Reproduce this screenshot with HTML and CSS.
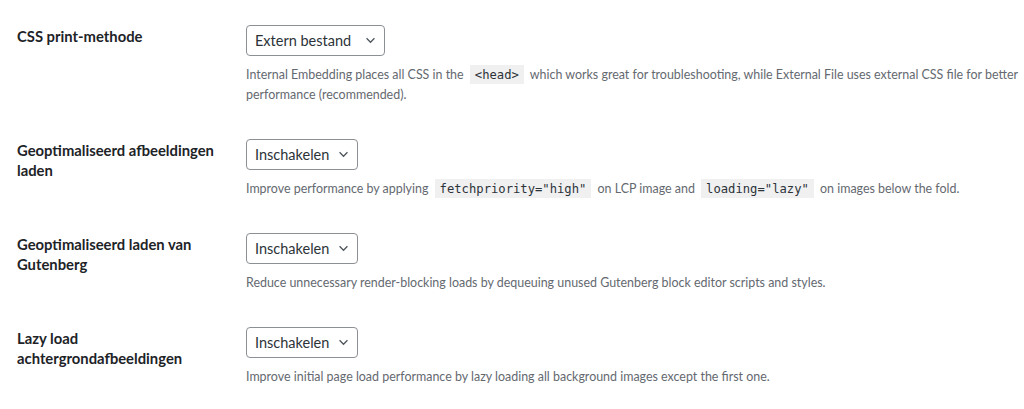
FILE: index.html
```html
<!DOCTYPE html>
<html lang="nl">
<head>
<meta charset="utf-8">
<title>Instellingen</title>
<link rel="stylesheet" href="styles.css">
</head>
<body>
<div class="form-table">
  <div class="row row-first">
    <div class="label">CSS print-methode</div>
    <div class="field">
      <div class="select-wrap">
        <select class="select wide"><option>Extern bestand</option></select>
        <svg class="chevron" viewBox="0 0 12 8" width="11" height="7"><path d="M1.5 1.5 L6 6 L10.5 1.5" fill="none" stroke="#50575e" stroke-width="1.5"/></svg>
      </div>
      <p class="description">Internal Embedding places all CSS in the <code>&lt;head&gt;</code> which works great for troubleshooting, while External File uses external CSS file for better performance (recommended).</p>
    </div>
  </div>
  <div class="row">
    <div class="label">Geoptimaliseerd afbeeldingen laden</div>
    <div class="field">
      <div class="select-wrap">
        <select class="select"><option>Inschakelen</option></select>
        <svg class="chevron" viewBox="0 0 12 8" width="11" height="7"><path d="M1.5 1.5 L6 6 L10.5 1.5" fill="none" stroke="#50575e" stroke-width="1.5"/></svg>
      </div>
      <p class="description">Improve performance by applying <code>fetchpriority="high"</code> on LCP image and <code>loading="lazy"</code> on images below the fold.</p>
    </div>
  </div>
  <div class="row">
    <div class="label">Geoptimaliseerd laden van Gutenberg</div>
    <div class="field">
      <div class="select-wrap">
        <select class="select"><option>Inschakelen</option></select>
        <svg class="chevron" viewBox="0 0 12 8" width="11" height="7"><path d="M1.5 1.5 L6 6 L10.5 1.5" fill="none" stroke="#50575e" stroke-width="1.5"/></svg>
      </div>
      <p class="description">Reduce unnecessary render-blocking loads by dequeuing unused Gutenberg block editor scripts and styles.</p>
    </div>
  </div>
  <div class="row">
    <div class="label">Lazy load achtergrondafbeeldingen</div>
    <div class="field">
      <div class="select-wrap">
        <select class="select"><option>Inschakelen</option></select>
        <svg class="chevron" viewBox="0 0 12 8" width="11" height="7"><path d="M1.5 1.5 L6 6 L10.5 1.5" fill="none" stroke="#50575e" stroke-width="1.5"/></svg>
      </div>
      <p class="description">Improve initial page load performance by lazy loading all background images except the first one.</p>
    </div>
  </div>
</div>
</body>
</html>
```

FILE: styles.css
```css
html, body {
  margin: 0;
  background: #ffffff;
}
body {
  font-family: Lato, "Open Sans", sans-serif;
  color: #1d2327;
}
.form-table {
  padding: 25px 0 0 17px;
}
.row {
  display: grid;
  grid-template-columns: 229px 1fr;
  padding-bottom: 34px;
}
.label {
  font-size: 14.8px;
  font-weight: 700;
  line-height: 20px;
  padding-top: 1px;
  width: 205px;
}
.field {
  display: flex;
  flex-direction: column;
  align-items: flex-start;
}
.select-wrap {
  position: relative;
  display: inline-block;
}
.select {
  -webkit-appearance: none;
  appearance: none;
  font-family: inherit;
  font-size: 14.5px;
  color: #2c3338;
  background: #fff;
  border: 1px solid #8c8f94;
  border-radius: 4px;
  height: 31px;
  width: 112px;
  padding: 0 24px 0 8px;
  margin: 0;
}
.select.wide {
  width: 139px;
}
.chevron {
  position: absolute;
  right: 9px;
  top: 12px;
  pointer-events: none;
}
.description {
  margin: 9px 0 0 0;
  font-size: 12.45px;
  line-height: 20px;
  color: #646970;
}
code {
  font-family: "DejaVu Sans Mono", monospace;
  font-size: 12.2px;
  background: #f0f0f1;
  color: #2c3338;
  padding: 3px 5px 2px;
  margin: 0 3px;
}
```
